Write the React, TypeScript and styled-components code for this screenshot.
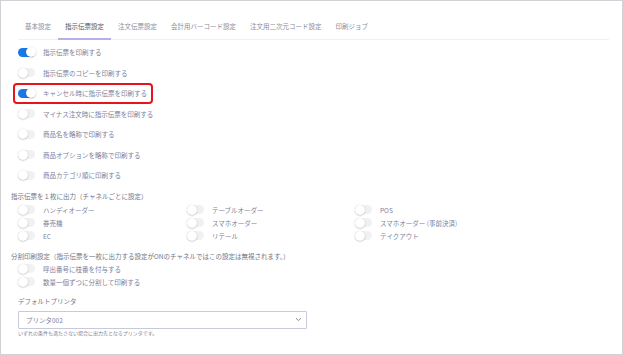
import React from 'react';
import styled, { createGlobalStyle } from 'styled-components';

const GlobalStyle = createGlobalStyle`
  html, body {
    margin: 0;
    padding: 0;
    background: #fff;
  }
  body {
    font-family: "Noto Sans CJK JP", "Noto Sans", sans-serif;
  }
`;

const TABS = [
  '基本設定',
  '指示伝票設定',
  '注文伝票設定',
  '会計用バーコード設定',
  '注文用二次元コード設定',
  '印刷ジョブ',
];

const OPTIONS = [
  { label: '指示伝票を印刷する', on: true },
  { label: '指示伝票のコピーを印刷する', on: false },
  { label: 'キャンセル時に指示伝票を印刷する', on: true, highlight: true },
  { label: 'マイナス注文時に指示伝票を印刷する', on: false },
  { label: '商品名を略称で印刷する', on: false },
  { label: '商品オプションを略称で印刷する', on: false },
  { label: '商品カテゴリ順に印刷する', on: false },
];

const CHANNELS = [
  'ハンディオーダー',
  'テーブルオーダー',
  'POS',
  '券売機',
  'スマホオーダー',
  'スマホオーダー (事前決済)',
  'EC',
  'リテール',
  'テイクアウト',
];

const SPLIT_OPTIONS = ['呼出番号に枝番を付与する', '数量一個ずつに分割して印刷する'];

export default function App() {
  return (
    <>
      <GlobalStyle />
      <Frame>
        <TabBar>
          {TABS.map((tab, i) => (
            <Tab key={tab} $active={i === 1}>
              {tab}
            </Tab>
          ))}
        </TabBar>

        <OptionList>
          {OPTIONS.map((opt) => (
            <OptionRow key={opt.label} $highlight={opt.highlight}>
              <Toggle $on={opt.on} />
              <Label>{opt.label}</Label>
            </OptionRow>
          ))}
        </OptionList>

        <SectionTitle $top={5}>指示伝票を１枚に出力（チャネルごとに設定）</SectionTitle>
        <ChannelGrid>
          {CHANNELS.map((ch) => (
            <CompactRow key={ch}>
              <Toggle $on={false} />
              <Label>{ch}</Label>
            </CompactRow>
          ))}
        </ChannelGrid>

        <SectionTitle $top={8.5}>
          分割印刷設定（指示伝票を一枚に出力する設定がONのチャネルではこの設定は無視されます。）
        </SectionTitle>
        <SplitList>
          {SPLIT_OPTIONS.map((s) => (
            <CompactRow key={s}>
              <Toggle $on={false} />
              <Label>{s}</Label>
            </CompactRow>
          ))}
        </SplitList>

        <PrinterBlock>
          <FieldLabel>デフォルトプリンタ</FieldLabel>
          <Select>
            <span>プリンタ002</span>
            <svg width="7" height="5" viewBox="0 0 7 5">
              <path d="M1 1.2 L3.5 3.6 L6 1.2" fill="none" stroke="#8a8ca0" strokeWidth="1" />
            </svg>
          </Select>
          <Helper>いずれの条件も満たさない場合に出力先となるプリンタです。</Helper>
        </PrinterBlock>
      </Frame>
    </>
  );
}

const Frame = styled.div`
  box-sizing: border-box;
  width: 623px;
  height: 355px;
  border: 1px solid #d2d2d6;
  padding: 16px 13px 0 10px;
  overflow: hidden;
`;

const TabBar = styled.div`
  display: flex;
  margin-left: 7px;
  border-bottom: 1px solid #efeff6;
`;

const Tab = styled.div<{ $active?: boolean }>`
  padding: 0 7px 2px;
  line-height: 19px;
  font-size: 6.5px;
  color: ${(p) => (p.$active ? '#55566a' : '#8c8d9a')};
  border-bottom: 2px solid ${(p) => (p.$active ? '#b7b0e8' : 'transparent')};
  margin-bottom: -1px;
  white-space: nowrap;
`;

const OptionList = styled.div`
  display: flex;
  flex-direction: column;
  margin-top: 2px;
  padding-left: 7px;
`;

const OptionRow = styled.div<{ $highlight?: boolean }>`
  position: relative;
  display: flex;
  align-items: center;
  gap: 8px;
  height: 20.5px;
  width: fit-content;

  &::after {
    content: '';
    display: ${(p) => (p.$highlight ? 'block' : 'none')};
    position: absolute;
    left: -5px;
    right: -6px;
    top: -0.5px;
    bottom: -0.5px;
    border: 2px solid #e8141b;
    border-radius: 4px;
  }
`;

const CompactRow = styled.div`
  display: flex;
  align-items: center;
  gap: 8px;
  height: 13px;
`;

const Toggle = styled.span<{ $on: boolean }>`
  position: relative;
  flex: none;
  width: 17px;
  height: 9px;
  border-radius: 5px;
  background: ${(p) => (p.$on ? '#1a78e6' : '#f1f1f4')};

  &::after {
    content: '';
    position: absolute;
    top: -0.5px;
    left: ${(p) => (p.$on ? '7.5px' : '-0.5px')};
    width: 10px;
    height: 10px;
    border-radius: 50%;
    background: #fff;
    box-shadow: 0 0.5px 1.5px rgba(0, 0, 0, 0.3);
  }
`;

const Label = styled.span`
  font-size: 6.5px;
  color: #7c809c;
  white-space: nowrap;
`;

const SectionTitle = styled.div<{ $top: number }>`
  margin-top: ${(p) => p.$top}px;
  line-height: 10px;
  font-size: 6.5px;
  color: #737584;
  white-space: nowrap;
`;

const ChannelGrid = styled.div`
  display: grid;
  grid-template-columns: 169px 168px 1fr;
  margin-top: 2.5px;
  padding-left: 7px;
`;

const SplitList = styled.div`
  display: flex;
  flex-direction: column;
  margin-top: 1.5px;
  padding-left: 7px;
`;

const PrinterBlock = styled.div`
  display: flex;
  flex-direction: column;
  margin-top: 7.5px;
  padding-left: 7px;
`;

const FieldLabel = styled.div`
  line-height: 10px;
  font-size: 6.5px;
  color: #737584;
`;

const Select = styled.div`
  box-sizing: border-box;
  display: flex;
  align-items: center;
  justify-content: space-between;
  width: 289px;
  height: 18px;
  margin-top: 5px;
  padding: 0 4px 0 7px;
  border: 1px solid #c9c9dc;
  border-radius: 1px;
  font-size: 6.5px;
  color: #7c809c;
`;

const Helper = styled.div`
  margin-top: 0;
  line-height: 8px;
  font-size: 5px;
  color: #7f8190;
  white-space: nowrap;
`;
